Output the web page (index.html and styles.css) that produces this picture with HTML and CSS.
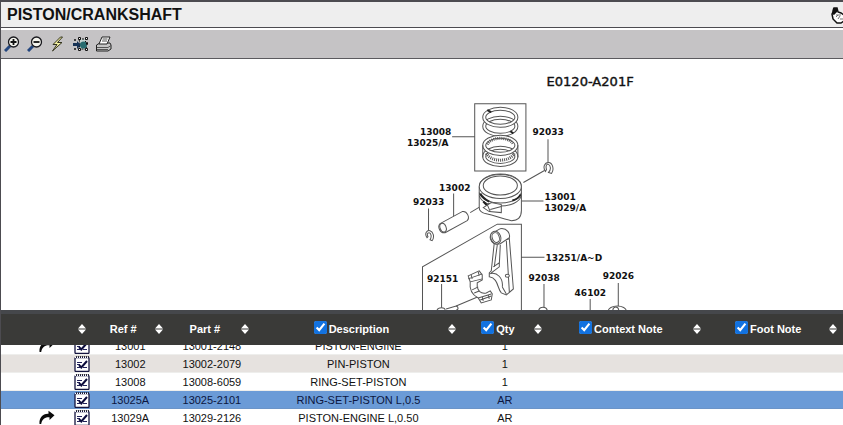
FILE: index.html
```html
<!DOCTYPE html>
<html lang="en">
<head>
<meta charset="utf-8">
<title>PISTON/CRANKSHAFT</title>
<link rel="stylesheet" href="styles.css">
</head>
<body>
<svg class="defs" aria-hidden="true">
  <symbol id="sort" viewBox="0 0 8 10"><path d="M4 0 8 4.400H0ZM4 10 0 5.600h8Z" fill="#fff"/></symbol>
  <symbol id="note" viewBox="0 0 16 17">
    <rect x="1" y="2.5" width="14" height="14" rx="1" fill="#fff" stroke="#15153f" stroke-width="1.3"/>
    <path d="M2 1.500h13" stroke="#333" stroke-dasharray="1 1"/><path d="M1 2.500h14" stroke="#fff" stroke-dasharray="1 1"/>
    <path d="M3 7.500h5M3 9.500h3M3 12.500h3M9 12.500h4" stroke="#22225a"/>
    <path d="m5 10 2.300 2.500L13 6" fill="none" stroke="#0c0c3c" stroke-width="2"/>
  </symbol>
  <symbol id="arrow" viewBox="0 0 16 15"><path d="M0.5 14C0 8 3.500 3.500 9.500 3.800V.8L15.500 5.300 10.500 10V7.200C6 6.800 3 9 2.200 14Z" fill="#0b0b0b"/></symbol>
</svg>

<header class="titlebar">
  <h1>PISTON/CRANKSHAFT</h1>
  <svg class="hand" viewBox="0 0 12 18" aria-hidden="true">
    <path d="M3 2h3l1 4 3 1 3 2v6l-3 2H6l-4-4-1-5 1-2Z" fill="#fff" stroke="#111" stroke-width="1.500"/>
    <path d="M2 2h4v4l-3 3-2-1Z" fill="#111"/>
    <path d="M5 11l2-2M7 13l2-3M5 9h5M9 13h3" stroke="#777"/>
  </svg>
</header>

<nav class="toolbar" aria-label="Diagram tools">
  <button type="button" aria-label="Zoom in"><svg viewBox="0 0 16 16"><path d="M1 15 6 10" stroke="#24467e" stroke-width="3"/><circle cx="9.500" cy="6" r="5" fill="#f4f4ee" stroke="#17171c" stroke-width="1.300"/><path d="M6.500 6h6M9.500 3v6" stroke="#111" stroke-width="1.800"/></svg></button>
  <button type="button" aria-label="Zoom out"><svg viewBox="0 0 16 16"><path d="M1 15 6 10" stroke="#24467e" stroke-width="3"/><circle cx="9.500" cy="6" r="5" fill="#f4f4ee" stroke="#17171c" stroke-width="1.300"/><path d="M6.500 6h6" stroke="#111" stroke-width="1.800"/></svg></button>
  <button type="button" aria-label="Highlight"><svg viewBox="0 0 16 16"><path d="M10.500 1 3 8.500h4L2.500 15 12 6.500H7.500L12.500 1Z" fill="#f5f2a2" stroke="#33331f"/></svg></button>
  <button type="button" aria-label="Fit selection"><svg viewBox="0 0 16 16"><path d="M6 3h7l-1 5 2 5H6l1-5Z" fill="#c5d3d1" stroke="#111" stroke-dasharray="2 1"/><path d="M0 7h4V5l4 4-4 4v-3H0Z" fill="#173356"/><circle cx="10.500" cy="9" r="3.500" fill="#276c70"/><path d="M5.500 1.500h2v2h-2ZM12.500 1.500h2v2h-2ZM13.500 6.500h1v2h-1ZM12.500 12.500h2v2h-2ZM5.500 12.500h2v2h-2ZM1.500 3.500h1v1h-1ZM1.500 12.500h1v1h-1Z" fill="#fff" stroke="#111"/></svg></button>
  <button type="button" aria-label="Print"><svg viewBox="0 0 16 16"><path d="M0.5 9 4 7h10l1 2v4l-3 2H.5Z" fill="#c6c6c6" stroke="#222"/><path d="M6 1h8l-3 7H3Z" fill="#fff" stroke="#222"/><path d="M6.500 3h5M6 5h5M1 11.500h11l3-2M1 13.500h11" stroke="#555" fill="none"/></svg></button>
</nav>

<main class="diagram">
<svg viewBox="0 0 842 250" preserveAspectRatio="xMidYMin slice" role="img" aria-label="Exploded view of piston and crankshaft">
  <g transform="translate(-1 -60)">
  <g class="ink">
    <path d="M474.500 104.500h51v67h-51ZM452 137.500h22M547.500 140v23M523 183l21-12M521 201.500h22M453.500 194v23M470 213l10-6M428.500 209v22"/>
    <path d="M422.500 311V267L497 224.500h24V311M521 257.500h23M441.500 284v26M456 306l26-11M543.500 284v23M589.500 299v12M617.500 283v23"/>
    <g>
      <ellipse class="band" cx="500" cy="127" rx="16" ry="8.500"/><ellipse class="face" cx="500" cy="127" rx="16" ry="8.500"/>
      <ellipse class="band" cx="500" cy="118" rx="16" ry="8.500"/><ellipse class="face" cx="500" cy="118" rx="16" ry="8.500"/>
      <path d="m487 111 4 2M510 132l3 2" class="heavy"/>
      <ellipse class="band" cx="500" cy="157" rx="16" ry="8.500"/><ellipse class="face" cx="500" cy="157" rx="16" ry="8.500"/>
      <path class="teeth" d="M486 154c5 9 23 9 28 0"/>
      <ellipse class="band" cx="500" cy="146" rx="16" ry="8.500"/><ellipse class="face" cx="500" cy="146" rx="16" ry="8.500"/>
      <path class="teeth" d="M487 145c4-8 22-8 26 0"/>
      <path d="M482.500 146v12M517.500 146v12"/>
    </g>
    <path d="M545 172c-3-4-1-9 3-9s6 7 3 11l-3-1c3-3 2-7 0-8s-3 2-2 5ZM427 238c-3-4 0-8 3-7s5 6 2 10l-2-1c2-3 1-7-1-7s-2 2-1 4Z"/>
    <g class="solid">
      <path d="M479 188c0-18 42-18 42 0v23c0 6-3 10-10 10-12-3-16-5-26-7-4-1-6-3-6-6Z"/>
      <path class="open" d="M479 193c4 14 38 14 42 0M479 196c4 14 38 14 42 0"/>
      <ellipse cx="500" cy="187" rx="21" ry="12"/><ellipse cx="500" cy="186" rx="17" ry="9.500"/>
      <path class="heavy" d="M480 194c2 4 5 6 9 8M512 201c4-1 7-3 8-6M483 202l4 4 3-2"/>
      <path d="m483 208 8-5 10 2v8l-12-1Z"/><path class="open" d="m490 210 11-3M487 205l3 7"/>
      <path d="m440 224 22-12c5-1 8 6 5 9l-22 12c-5 1-8-6-5-9Z"/><ellipse cx="443" cy="228" rx="3" ry="4.500" transform="rotate(-20 443 228)"/>
      <path d="m494 243-3 28-2 2v4c9 1 8 12 12 16l5 2 7-6-4-50Z"/>
      <path class="open" d="m497 245-3 22M500 245l-1 20M491 273l8-6v-4l-6 4M489 274c8-3 14 5 13 13M502 287l4 7M506 241l3 51"/><ellipse cx="507" cy="276" rx="2" ry="1.500"/>
      <path d="m491 234 9-5c7-1 10 5 9 9l-9 6c-8 2-12-5-9-10Z"/><ellipse cx="495.500" cy="238" rx="5" ry="6.500" transform="rotate(-20 495 238)"/><ellipse cx="495.500" cy="238" rx="3.500" ry="5" transform="rotate(-20 495 238)"/>
      <path d="m468 276 11-5 3 4v5l-5 3v4c1 4 4 7 9 6l4-2 2 3-1 6-10 3-3-5c-6-3-9-8-8-16Z"/>
      <path class="open" d="m468 279 14-5M470 282l12-3M472 290l6-3M478 298l13-4M480 300l11-4M471 275l1 4M478 272l1 4M474 293l5-2M482 297l1 4M488 295l1 4"/>
      <path d="M437 310c1-3 8-3 8 0M446 309l10-3c3 1 2 4 0 4M538 311c1-5 8-5 9 0"/>
      <ellipse cx="616.500" cy="311" rx="9" ry="5"/><ellipse cx="615" cy="311" rx="3" ry="4"/>
    </g>
  </g>
  <g class="labels">
    <text class="code" x="546" y="87">E0120-A201F</text>
    <text x="420" y="136">13008</text><text x="407" y="147">13025/A</text>
    <text x="532" y="136">92033</text><text x="439" y="191">13002</text>
    <text x="413" y="205">92033</text><text x="544" y="200">13001</text><text x="544" y="211">13029/A</text>
    <text x="545" y="261">13251/A~D</text><text x="427" y="282">92151</text>
    <text x="528" y="281">92038</text><text x="602" y="279">92026</text><text x="574" y="296">46102</text>
  </g>
  </g>
</svg>
</main>

<section class="parts" id="parts" aria-label="Parts list">
<table>
  <colgroup><col class="c-arrow"><col class="c-note"><col class="c-ref"><col class="c-part"><col class="c-desc"><col class="c-qty"><col class="c-context"><col class="c-foot"></colgroup>
  <thead>
    <tr>
      <th colspan="2"><div class="head"><span></span><button type="button" aria-label="Sort"><svg><use href="#sort"/></svg></button></div></th>
      <th><div class="head"><span>Ref #</span><button type="button" aria-label="Sort by ref"><svg><use href="#sort"/></svg></button></div></th>
      <th><div class="head"><span>Part #</span><button type="button" aria-label="Sort by part"><svg><use href="#sort"/></svg></button></div></th>
      <th><div class="head"><label><input type="checkbox" checked>Description</label><button type="button" aria-label="Sort by description"><svg><use href="#sort"/></svg></button></div></th>
      <th><div class="head"><label><input type="checkbox" checked>Qty</label><button type="button" aria-label="Sort by quantity"><svg><use href="#sort"/></svg></button></div></th>
      <th><div class="head"><label><input type="checkbox" checked>Context Note</label><button type="button" aria-label="Sort by context note"><svg><use href="#sort"/></svg></button></div></th>
      <th><div class="head"><label><input type="checkbox" checked>Foot Note</label><button type="button" aria-label="Sort by foot note"><svg><use href="#sort"/></svg></button></div></th>
    </tr>
  </thead>
  <tbody>
    <tr><td class="go"><svg><use href="#arrow"/></svg></td><td class="memo"><svg><use href="#note"/></svg></td><td>13001</td><td>13001-2148</td><td>PISTON-ENGINE</td><td>1</td><td></td><td></td></tr>
    <tr class="alt"><td></td><td class="memo"><svg><use href="#note"/></svg></td><td>13002</td><td>13002-2079</td><td>PIN-PISTON</td><td>1</td><td></td><td></td></tr>
    <tr><td></td><td class="memo"><svg><use href="#note"/></svg></td><td>13008</td><td>13008-6059</td><td>RING-SET-PISTON</td><td>1</td><td></td><td></td></tr>
    <tr class="selected"><td></td><td class="memo"><svg><use href="#note"/></svg></td><td>13025A</td><td>13025-2101</td><td>RING-SET-PISTON L,0.5</td><td>AR</td><td></td><td></td></tr>
    <tr><td class="go"><svg><use href="#arrow"/></svg></td><td class="memo"><svg><use href="#note"/></svg></td><td>13029A</td><td>13029-2126</td><td>PISTON-ENGINE L,0.50</td><td>AR</td><td></td><td></td></tr>
  </tbody>
</table>
</section>
<script src="script.js"></script>
</body>
</html>
```
FILE: styles.css
```css
* { box-sizing: border-box; }
body {
  margin: 0;
  height: 100vh;
  display: flex;
  flex-direction: column;
  overflow: hidden;
  border-left: 1px solid #4c4b50;
  background: #fff;
  color: #111;
  font: 11px/16px "Liberation Sans", sans-serif;
}
button { border: 0; padding: 0; background: none; display: block; }
svg { display: block; }
.defs { position: absolute; width: 0; height: 0; }

.titlebar {
  display: flex;
  align-items: center;
  justify-content: space-between;
  flex: none;
  height: 28px;
  padding-left: 6px;
  border-top: 2px solid #4c4b50;
  border-bottom: 1px solid #4c4b50;
  background: #eee;
}
.titlebar h1 { margin: 0; font-size: 16px; line-height: 24px; }
.hand { width: 12px; height: 18px; }

.toolbar {
  display: flex;
  align-items: center;
  gap: 7px;
  flex: none;
  height: 31px;
  padding-left: 3px;
  border-top: 2px solid #fff;
  border-bottom: 1px solid #5b5a5e;
  background: #c5c3c5;
}
.toolbar svg { width: 16px; height: 16px; }

.diagram { flex: 1; min-height: 0; overflow: hidden; }
.diagram svg { width: 100%; height: 100%; }
.ink { fill: none; stroke: #555; stroke-width: 1; }
.solid { fill: #fff; }
.open { fill: none; }
.heavy { fill: none; stroke: #222; stroke-width: 2; }
.band { stroke-width: 4; }
.face { stroke: #fff; stroke-width: 2; }
.teeth { stroke-width: 3; stroke-dasharray: 1 1; }
.labels { font: bold 9px "DejaVu Sans", sans-serif; fill: #111; }
.labels .code { font-size: 13px; font-weight: normal; stroke: #111; stroke-width: 0.4; }

.parts { flex: 0 0 115px; overflow: hidden; }
table { width: 100%; table-layout: fixed; border-collapse: separate; border-spacing: 0; }
.c-arrow { width: 8.4%; }
.c-note { width: 2.4%; }
.c-ref { width: 9.1%; }
.c-part { width: 10.3%; }
.c-desc { width: 24.5%; }
.c-qty { width: 10.3%; }
.c-context { width: 18.9%; }
.c-foot { width: 16.1%; }
th {
  position: sticky;
  top: 0;
  z-index: 1;
  height: 35px;
  padding: 0 6px 2px 0;
  border-top: 4px solid #45474b;
  background: #3a3a38;
  color: #fff;
}
.head { display: flex; align-items: center; }
.head > :first-child { flex: 1; display: flex; align-items: center; justify-content: center; gap: 2px; white-space: nowrap; }
.head svg { width: 8px; height: 10px; }
.head input { width: 13px; height: 13px; margin: 0 0 3px; accent-color: #1272e0; }
td { height: 18px; padding: 0; border-bottom: 1px solid #eeeeec; text-align: center; white-space: nowrap; }
.alt td { background: #e6e2df; }
.selected td { background: #6b9bd7; border-color: #6b94c8; color: #0b1640; }
.memo svg { width: 16px; height: 17px; margin: 0 auto; }
.go svg { width: 16px; height: 15px; margin-left: 38px; }
```
FILE: script.js
```js
document.getElementById("parts").scrollTop = 8;
```
